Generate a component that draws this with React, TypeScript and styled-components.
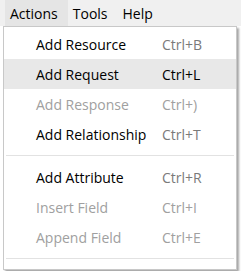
import React from 'react';
import styled, { createGlobalStyle } from 'styled-components';

const GlobalStyle = createGlobalStyle`
	html, body {
		margin: 0;
		padding: 0;
		background: #ffffff;
		overflow: hidden;
	}
	body {
		font-family: 'Open Sans', 'Noto Sans', sans-serif;
	}
`;

const Window = styled.div`
	position: relative;
	width: 241px;
	height: 271px;
	background: #ffffff;
	overflow: hidden;
`;

const MenuBar = styled.div`
	display: flex;
	height: 26px;
	padding-left: 5px;
	background: #f0f0f0;
`;

const MenuBarItem = styled.div<{ $open?: boolean }>`
	display: flex;
	align-items: center;
	height: 26px;
	padding: 0 10px 0 5px;
	font-size: 14px;
	color: #000;
	background: ${(p) => (p.$open ? '#e5e5e5' : 'transparent')};
`;

const Dropdown = styled.div`
	position: absolute;
	left: 3px;
	top: 26px;
	width: 232px;
	height: 240px;
	padding-top: 2px;
	background: #ffffff;
	border: 1px solid #c8c8c8;
	box-shadow: 2px 2px 2px rgba(0, 0, 0, 0.35);
`;

const Row = styled.div<{ $active?: boolean; $disabled?: boolean }>`
	display: grid;
	grid-template-columns: 126px 1fr;
	align-items: center;
	height: 30px;
	padding-left: 32px;
	font-size: 14px;
	background: ${(p) => (p.$active ? '#e8e8e8' : 'transparent')};
	color: ${(p) => (p.$disabled ? '#a0a0a0' : '#000')};
`;

const Shortcut = styled.span<{ $active?: boolean; $disabled?: boolean }>`
	color: ${(p) => (p.$active ? '#000' : p.$disabled ? '#a0a0a0' : '#7a7a7a')};
`;

const Separator = styled.div`
	height: 1px;
	margin: 6px 2px 6px 2px;
	background: #e2e2e2;
`;

type Item = { label: string; keys: string; active?: boolean; disabled?: boolean } | 'sep';

const items: Item[] = [
	{ label: 'Add Resource', keys: 'Ctrl+B' },
	{ label: 'Add Request', keys: 'Ctrl+L', active: true },
	{ label: 'Add Response', keys: 'Ctrl+)', disabled: true },
	{ label: 'Add Relationship', keys: 'Ctrl+T' },
	'sep',
	{ label: 'Add Attribute', keys: 'Ctrl+R' },
	{ label: 'Insert Field', keys: 'Ctrl+I', disabled: true },
	{ label: 'Append Field', keys: 'Ctrl+E', disabled: true },
	'sep',
];

export default function App() {
	return (
		<Window>
			<GlobalStyle />
			<MenuBar>
				<MenuBarItem $open>Actions</MenuBarItem>
				<MenuBarItem>Tools</MenuBarItem>
				<MenuBarItem>Help</MenuBarItem>
			</MenuBar>
			<Dropdown>
				{items.map((item, i) =>
					item === 'sep' ? (
						<Separator key={i} />
					) : (
						<Row key={i} $active={item.active} $disabled={item.disabled}>
							<span>{item.label}</span>
							<Shortcut $active={item.active} $disabled={item.disabled}>
								{item.keys}
							</Shortcut>
						</Row>
					),
				)}
			</Dropdown>
		</Window>
	);
}
